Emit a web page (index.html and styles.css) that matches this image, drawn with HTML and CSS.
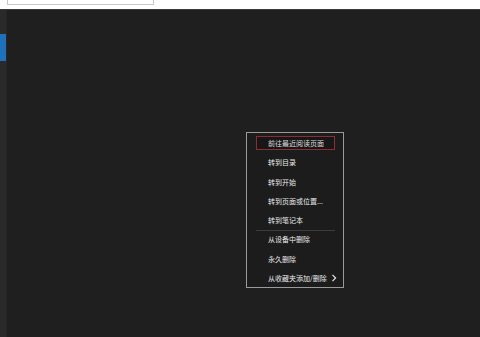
FILE: index.html
```html
<!DOCTYPE html>
<html>
<head>
  <meta charset="utf-8">
  <link rel="stylesheet" href="styles.css">
</head>
<body>
  <div class="topbar">
    <div class="search-box"></div>
  </div>

  <div class="workspace">
    <div class="side-strip">
      <div class="side-active"></div>
    </div>
    <div class="reader"></div>
  </div>

  <div class="context-menu">
    <div class="menu-item focused">前往最近阅读页面</div>
    <div class="menu-item">转到目录</div>
    <div class="menu-item">转到开始</div>
    <div class="menu-item">转到页面或位置...</div>
    <div class="menu-item">转到笔记本</div>
    <div class="menu-sep"></div>
    <div class="menu-item">从设备中删除</div>
    <div class="menu-item">永久删除</div>
    <div class="menu-item has-sub">从收藏夹添加/删除
      <svg class="chevron" width="6" height="8" viewBox="0 0 6 8"><path d="M1.5 0.8 L4.6 4 L1.5 7.2" fill="none" stroke="#e6e6e6" stroke-width="1.2"/></svg>
    </div>
  </div>
</body>
</html>
```

FILE: styles.css
```css
html, body {
  margin: 0;
  height: 100%;
}

body {
  font-family: "Noto Sans CJK SC", "Noto Sans", sans-serif;
  background: #1f1f1f;
  display: flex;
  flex-direction: column;
  overflow: hidden;
}

.topbar {
  height: 9px;
  background: #ffffff;
  border-bottom: 1px solid #3a3a3a;
  padding-left: 7px;
  flex: 0 0 auto;
}

.search-box {
  width: 145px;
  height: 4px;
  border: 1px solid #c8c8c8;
  border-top: none;
  background: #fff;
}

.workspace {
  flex: 1;
  display: flex;
}

.side-strip {
  width: 6px;
  background: #2a2a2a;
  border-right: 1px solid #262626;
  padding-top: 24px;
}

.side-active {
  width: 6px;
  height: 27px;
  background: #1e72bd;
}

.reader {
  flex: 1;
  background: #1f1f1f;
}

.context-menu {
  position: absolute;
  left: 246px;
  top: 132px;
  width: 79px;
  padding: 3px 8px 2px 9px;
  background: #1c1c1c;
  border: 1px solid #9a9a9a;
}

.menu-item {
  height: 14px;
  line-height: 14px;
  margin-bottom: 5.3px;
  padding-left: 11px;
  font-size: 7px;
  color: #e8e8e8;
  white-space: nowrap;
  border: 1px solid transparent;
  box-sizing: border-box;
  display: flex;
  align-items: center;
}

.menu-item:last-child {
  margin-bottom: 0;
}

.menu-item.focused {
  border-color: #8e2c34;
  background: #171717;
  color: #dcdcdc;
}

.menu-sep {
  height: 1px;
  background: #3c3c3c;
  margin: -2px 0 1px;
}

.chevron {
  flex: none;
  margin-left: 4px;
}
```
